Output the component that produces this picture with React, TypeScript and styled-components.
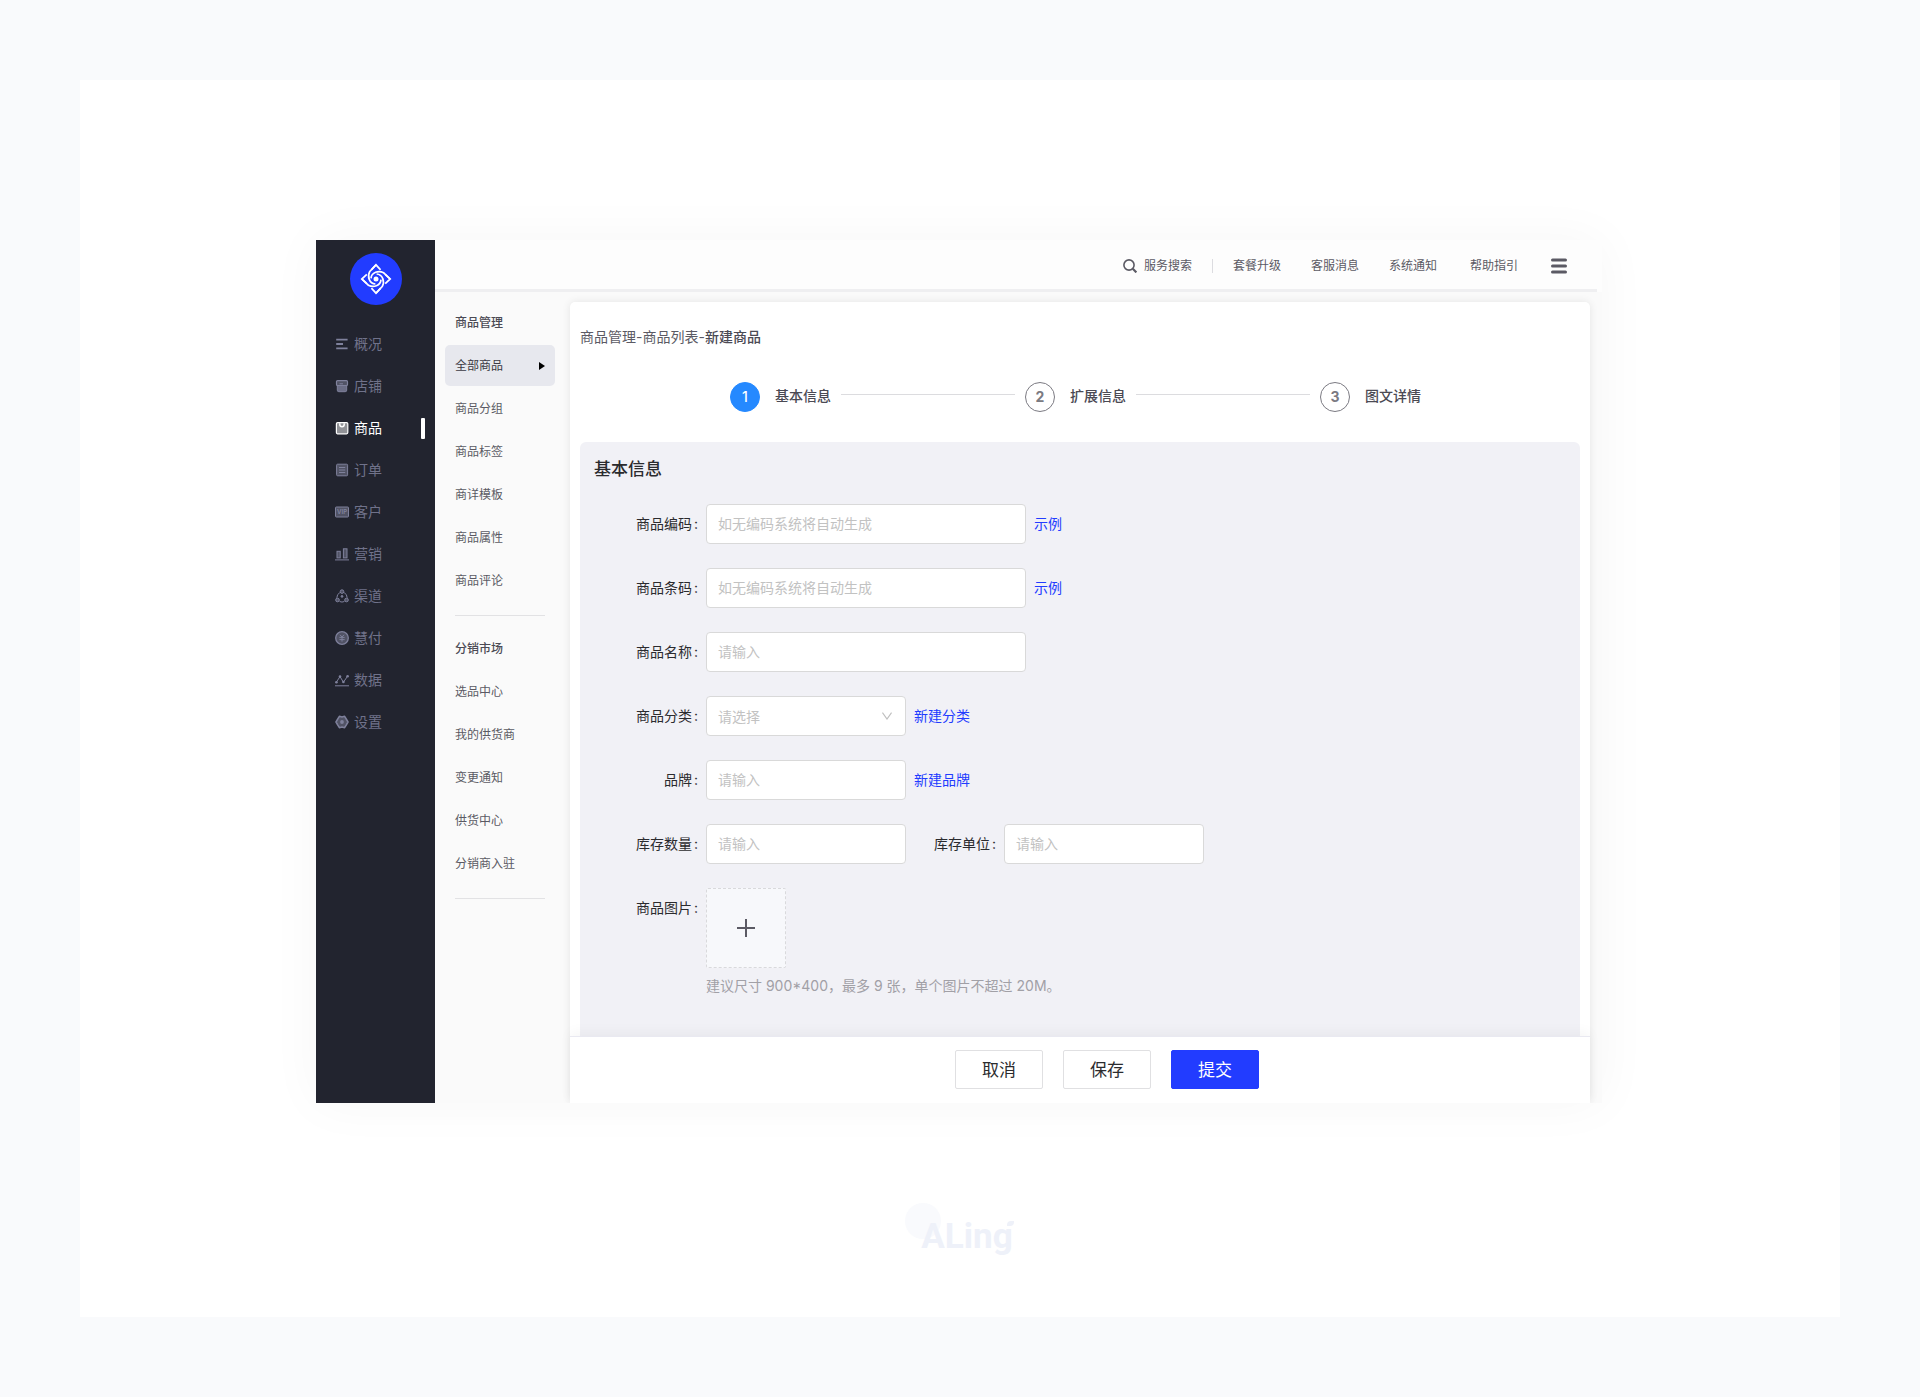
import React from 'react';
import styled, { createGlobalStyle } from 'styled-components';

const font = 'Inter, "Noto Sans CJK SC", sans-serif';

const GlobalStyle = createGlobalStyle`
  *, *::before, *::after { box-sizing: border-box; }
  body { margin: 0; background: #f9fafc; font-family: ${font}; color: #5b5a64; font-size: 14px; line-height: 20px; }
  button, input, select { font-family: inherit; font-size: inherit; line-height: inherit; }
  a { text-decoration: none; color: inherit; }
  ul { list-style: none; margin: 0; padding: 0; }
  svg { display: block; }
`;

const Page = styled.div`
  display: flex;
  flex-direction: column;
  min-height: 100vh;
  padding: 80px;
`;

const Sheet = styled.div`
  flex: 1;
  display: flex;
  flex-direction: column;
  align-items: center;
  background: #fff;
  padding: 160px 238px 40px 236px;
`;

const Shell = styled.div`
  align-self: stretch;
  display: flex;
  background: #fafafa;
  overflow: hidden;
  box-shadow: 0 0 50px rgba(0, 0, 0, 0.04);
`;

const Sidebar = styled.aside`
  flex: none;
  width: 119px;
  padding-top: 13px;
  background: #22242f;
`;

const Brand = styled.a`
  display: flex;
  align-items: center;
  justify-content: center;
  width: 52px;
  height: 52px;
  margin: 0 auto 18px;
  border-radius: 50%;
  background: #223cff;
`;

const NavLink = styled.a<{ $active?: boolean }>`
  display: flex;
  align-items: center;
  gap: 5px;
  height: 42px;
  padding: 0 10px 0 19px;
  color: ${p => (p.$active ? '#ffffff' : '#70728a')};

  svg { color: ${p => (p.$active ? '#ffffff' : '#7f819c')}; }

  &::after {
    content: '';
    display: ${p => (p.$active ? 'block' : 'none')};
    margin-left: auto;
    width: 4px;
    height: 21px;
    border-radius: 1px;
    background: #fff;
  }
`;

const Content = styled.div`
  flex: 1;
  min-width: 0;
  display: flex;
  flex-direction: column;
`;

const TopBar = styled.header`
  background: #fdfdfd;
`;

const TopBarRow = styled.div`
  display: flex;
  align-items: center;
  justify-content: flex-end;
  gap: 33px;
  height: 49px;
  padding: 2px 35px 0 0;
  font-size: 12px;
`;

const TopBarLine = styled.div`
  height: 3px;
  margin-right: 5px;
  background: #efeff1;
`;

const TopGroup = styled.div`
  display: flex;
  align-items: center;
  gap: 20px;
`;

const TopLinks = styled.nav`
  display: flex;
  gap: 30px;
`;

const PlainButton = styled.button`
  display: flex;
  align-items: center;
  gap: 7px;
  padding: 0;
  border: 0;
  background: none;
  color: inherit;
  cursor: pointer;
`;

const Separator = styled.span`
  width: 1px;
  height: 14px;
  background: #dcdce0;
`;

const Body = styled.div`
  flex: 1;
  display: flex;
`;

const SubNav = styled.nav`
  flex: none;
  width: 135px;
  padding: 10px 15px 0 10px;
  font-size: 12px;
`;

const SubGroup = styled.ul`
  display: flex;
  flex-direction: column;
  gap: 2px;
  padding-bottom: 14px;

  &::after {
    content: '';
    height: 1px;
    margin: 12px 10px 0;
    background: #e2e2e4;
  }

  & + & { margin-top: -2px; }
`;

const SubTitle = styled.li`
  display: flex;
  align-items: center;
  height: 41px;
  padding: 0 10px;
  font-weight: 500;
  color: #4b4a54;
`;

const SubLink = styled.a<{ $active?: boolean }>`
  display: flex;
  align-items: center;
  justify-content: space-between;
  height: 41px;
  padding: 0 10px;
  border-radius: 5px;
  background: ${p => (p.$active ? '#e7e8ee' : 'transparent')};
  color: ${p => (p.$active ? '#3b3a44' : '#5b5a64')};
`;

const Main = styled.main`
  flex: 1;
  min-width: 0;
  display: flex;
  padding: 10px 12px 0 0;
`;

const Card = styled.section`
  flex: 1;
  display: flex;
  flex-direction: column;
  border-radius: 5px 5px 0 0;
  background: #fff;
  box-shadow: 0 0 8px rgba(0, 0, 0, 0.09);
`;

const CardBody = styled.div`
  flex: 1;
  display: flex;
  flex-direction: column;
  padding: 25px 10px 0;
`;

const Breadcrumb = styled.nav`
  color: #5b5a64;

  strong { font-weight: 500; color: #4b4a54; }
`;

const Steps = styled.ol`
  display: flex;
  align-items: center;
  list-style: none;
  margin: 35px 0 30px;
  padding: 0 159px 0 150px;
`;

const Step = styled.li`
  flex: none;
  display: flex;
  align-items: center;
  gap: 15px;
  font-weight: 500;
  color: #4b4a54;
`;

const StepNumber = styled.span<{ $active?: boolean }>`
  display: flex;
  align-items: center;
  justify-content: center;
  width: 30px;
  height: 30px;
  border: 1px solid ${p => (p.$active ? '#2589ff' : '#7b7a82')};
  border-radius: 50%;
  background: ${p => (p.$active ? '#2589ff' : '#ffffff')};
  color: ${p => (p.$active ? '#ffffff' : '#7b7a82')};
  font-weight: ${p => (p.$active ? 500 : 700)};
`;

const StepName = styled.span`
  padding-bottom: 2px;
`;

const StepLine = styled.li`
  flex: 1;
  height: 1px;
  margin: 0 10px 6px;
  background: #dcdcdf;
`;

const Panel = styled.form`
  flex: 1;
  padding: 14px 14px 40px;
  border-radius: 6px 6px 0 0;
  background: #f1f1f6;
`;

const PanelTitle = styled.h2`
  margin: 0 0 22px;
  font-size: 17px;
  line-height: 26px;
  font-weight: 500;
  color: #2b2b2e;
`;

const Rows = styled.div`
  display: flex;
  flex-direction: column;
  gap: 24px;
`;

const Row = styled.div`
  display: flex;
  align-items: flex-start;
  gap: 8px;
  line-height: 40px;
`;

const Label = styled.label<{ $inline?: boolean }>`
  flex: none;
  width: ${p => (p.$inline ? 'auto' : '104px')};
  padding-left: ${p => (p.$inline ? '20px' : '0')};
  text-align: right;
  color: #2b2b2e;

  span { margin-left: 2px; }
`;

const Input = styled.input<{ $wide?: boolean }>`
  width: ${p => (p.$wide ? '320px' : '200px')};
  height: 40px;
  padding: 0 11px;
  border: 1px solid #d9d9d9;
  border-radius: 4px;
  background: #fff;
  color: #2b2b2e;
  outline: none;

  &::placeholder { color: #c2c2c2; opacity: 1; }
  &:focus { border-color: #223cff; }
`;

const SelectWrap = styled.div`
  position: relative;
  width: 200px;
  height: 40px;

  svg {
    position: absolute;
    top: 16px;
    right: 14px;
    pointer-events: none;
  }
`;

const Select = styled.select`
  display: block;
  width: 100%;
  height: 40px;
  padding: 0 32px 0 11px;
  border: 1px solid #d9d9d9;
  border-radius: 4px;
  background: #fff;
  color: #c2c2c2;
  appearance: none;
  outline: none;
`;

const TextLink = styled.a`
  color: #223cff;
`;

const Upload = styled.label`
  display: flex;
  align-items: center;
  justify-content: center;
  width: 80px;
  height: 80px;
  border: 1px dashed #d9d9dc;
  border-radius: 2px;
  background: #f7f8fb;
  color: #5b5a64;
  cursor: pointer;

  input { display: none; }
`;

const Hint = styled.p`
  margin: 8px 0 0;
  line-height: 20px;
  color: #a1a0a6;
`;

const Footer = styled.footer`
  display: flex;
  justify-content: center;
  gap: 20px;
  padding: 13px 0 14px 54px;
  border-top: 1px solid #e9e9f1;
  background: #fff;
  box-shadow: 0 -4px 12px rgba(0, 0, 0, 0.04);
`;

const Button = styled.button<{ $primary?: boolean }>`
  width: 88px;
  height: 39px;
  padding: 0;
  border: 1px solid ${p => (p.$primary ? '#223cff' : '#e0e0e2')};
  border-radius: 2px;
  background: ${p => (p.$primary ? '#223cff' : '#ffffff')};
  color: ${p => (p.$primary ? '#ffffff' : '#2b2b2e')};
  font-size: 17px;
  cursor: pointer;
`;

const Signature = styled.div`
  display: flex;
  margin-top: 100px;
  padding-left: 16px;
  position: relative;
  color: #eef1f9;
  font-family: Roboto, sans-serif;
  font-size: 35px;
  font-weight: 700;
  line-height: 68px;

  svg { position: absolute; left: 0; top: 0; }
  span { position: relative; }
`;

const Svg = ({ children }: { children: React.ReactNode }) => (
  <svg width="14" height="14" viewBox="0 0 14 14" fill="none" stroke="currentColor" aria-hidden="true">
    {children}
  </svg>
);

const soft = { fill: 'currentColor', fillOpacity: 0.5 };

const sections: { name: string; icon: React.ReactNode }[] = [
  { name: '概况', icon: <Svg><path strokeWidth="1.8" d="M1.2 2.6H12.6M1.2 7H8M1.2 11.4H12.6" /></Svg> },
  {
    name: '店铺',
    icon: (
      <Svg>
        <path {...soft} fillOpacity={0.8} d="M2.3 6.5V11.2Q2.3 12.7 3.8 12.7H10.2Q11.7 12.7 11.7 11.2V6.5" />
        <rect {...soft} x="1.5" y="1.7" width="11" height="4.8" rx="1" strokeWidth="1.2" />
        <path d="M4.5 4.8H8" />
      </Svg>
    ),
  },
  {
    name: '商品',
    icon: (
      <Svg>
        <rect {...soft} x="1.4" y="1.6" width="11.4" height="11.2" rx="1.2" strokeWidth="1.2" />
        <path strokeWidth="1.5" d="M4.8 2.2V3.6Q4.8 5.8 7 5.8T9.2 3.6V2.2" />
      </Svg>
    ),
  },
  {
    name: '订单',
    icon: (
      <Svg>
        <rect {...soft} x="1.6" y="1.2" width="11" height="11.6" rx="1" />
        <path d="M4 4.5H10.2M4 7H10.2M4 9.5H10.2" />
      </Svg>
    ),
  },
  {
    name: '客户',
    icon: (
      <Svg>
        <rect {...soft} x="0.5" y="2" width="13" height="10" rx="0.8" />
        <text x="7" y="9.3" textAnchor="middle" fontSize="6" fontWeight="700" fill="currentColor" stroke="none">
          VIP
        </text>
      </Svg>
    ),
  },
  {
    name: '营销',
    icon: (
      <Svg>
        <rect {...soft} x="2" y="4.3" width="3.2" height="6.6" />
        <rect {...soft} x="8.4" y="1.8" width="3.6" height="9.1" />
        <path d="M0 12.9H14" />
      </Svg>
    ),
  },
  {
    name: '渠道',
    icon: (
      <Svg>
        <circle {...soft} cx="7" cy="2.6" r="1.8" />
        <circle {...soft} cx="2.5" cy="11" r="1.8" />
        <circle {...soft} cx="11.5" cy="11" r="1.8" />
        <path d="M4.9 3.6Q2 5 1.8 8.8M9.1 3.6Q12 5 12.2 8.8M4.6 12.5Q7 13.6 9.4 12.5" />
        <circle cx="7" cy="7.4" r="0.9" fill="currentColor" />
      </Svg>
    ),
  },
  {
    name: '慧付',
    icon: (
      <Svg>
        <circle {...soft} cx="7" cy="7" r="6.3" strokeWidth="1.3" />
        <path d="M5 3.8L7 6L9 3.8M4.4 6.4H9.6M4.4 8.6H9.6M7 6V10.6" />
      </Svg>
    ),
  },
  {
    name: '数据',
    icon: (
      <Svg>
        <path strokeWidth="1" d="M1.2 9.4L5 3.6L8.4 9.2L12.6 3.2" />
        <g fill="currentColor" stroke="none">
          <circle cx="1.4" cy="9.2" r="1.3" />
          <circle cx="5" cy="3.6" r="1.3" />
          <circle cx="8.4" cy="9" r="1.3" />
          <circle cx="12.6" cy="3.2" r="1.3" />
        </g>
        <path d="M0 12.8H14" />
      </Svg>
    ),
  },
  {
    name: '设置',
    icon: (
      <Svg>
        <path
          {...soft}
          strokeWidth="1.6"
          strokeLinejoin="round"
          d="M4.4 1.3L7 2L9.6 1.3L11.2 3.9L13 7L11.2 10.1L9.6 12.7L7 12L4.4 12.7L2.8 10.1L1 7L2.8 3.9Z"
        />
        <circle cx="7" cy="7" r="1.9" fill="currentColor" stroke="none" />
      </Svg>
    ),
  },
];

const BrandMark = () => (
  <svg width="32" height="32" viewBox="-16 -16 32 32" fill="none" stroke="#fff" strokeWidth="1.7" aria-hidden="true">
    {[0, 90, 180, 270].map(angle => (
      <g key={angle} transform={`rotate(${angle})`}>
        <path d="M-4.4 -9.4L0 -14.2L4.6 -9.2" />
        <path d="M14.2 0L7.6 -6.2C2.6 -9 -4.6 -6.8 -5 -0.6" />
      </g>
    ))}
    <circle r="2.5" fill="#fff" stroke="none" />
  </svg>
);

const subGroups = [
  { title: '商品管理', items: ['全部商品', '商品分组', '商品标签', '商详模板', '商品属性', '商品评论'] },
  { title: '分销市场', items: ['选品中心', '我的供货商', '变更通知', '供货中心', '分销商入驻'] },
];

const steps = ['基本信息', '扩展信息', '图文详情'];

const FieldLabel = ({ id, text, inline }: { id: string; text: string; inline?: boolean }) => (
  <Label htmlFor={id} $inline={inline}>
    {text}
    <span>:</span>
  </Label>
);

export default function App() {
  return (
    <>
      <GlobalStyle />
      <Page>
        <Sheet>
          <Shell>
            <Sidebar>
              <Brand href="#" aria-label="首页">
                <BrandMark />
              </Brand>
              <nav>
                {sections.map(s => (
                  <NavLink key={s.name} href="#" $active={s.name === '商品'}>
                    {s.icon}
                    {s.name}
                  </NavLink>
                ))}
              </nav>
            </Sidebar>
            <Content>
              <TopBar>
                <TopBarRow>
                  <TopGroup>
                    <PlainButton type="button">
                      <svg width="14" height="14" viewBox="0 0 14 14" fill="none" stroke="currentColor" strokeWidth="1.6" aria-hidden="true">
                        <circle cx="6" cy="6" r="5.1" />
                        <path strokeWidth="2.2" d="M9.8 9.8L13.4 13.4" />
                      </svg>
                      服务搜索
                    </PlainButton>
                    <Separator />
                    <TopLinks>
                      <a href="#">套餐升级</a>
                      <a href="#">客服消息</a>
                      <a href="#">系统通知</a>
                    </TopLinks>
                  </TopGroup>
                  <a href="#">帮助指引</a>
                  <PlainButton type="button" aria-label="菜单">
                    <svg width="16" height="16" viewBox="0 0 16 16" stroke="currentColor" strokeWidth="3" strokeLinecap="round" aria-hidden="true">
                      <path d="M1.5 2H14.5M1.5 8H14.5M1.5 14H14.5" />
                    </svg>
                  </PlainButton>
                </TopBarRow>
                <TopBarLine />
              </TopBar>
              <Body>
                <SubNav>
                  {subGroups.map(g => (
                    <SubGroup key={g.title}>
                      <SubTitle>{g.title}</SubTitle>
                      {g.items.map(item => (
                        <li key={item}>
                          <SubLink href="#" $active={item === '全部商品'}>
                            {item}
                            {item === '全部商品' && (
                              <svg width="6" height="8" viewBox="0 0 6 8" aria-hidden="true">
                                <path d="M0 0L6 4L0 8Z" fill="#000" />
                              </svg>
                            )}
                          </SubLink>
                        </li>
                      ))}
                    </SubGroup>
                  ))}
                </SubNav>
                <Main>
                  <Card>
                    <CardBody>
                      <Breadcrumb>
                        <a href="#">商品管理</a>-<a href="#">商品列表</a>-<strong>新建商品</strong>
                      </Breadcrumb>
                      <Steps>
                        {steps.map((name, i) => (
                          <React.Fragment key={name}>
                            {i > 0 && <StepLine aria-hidden="true" />}
                            <Step>
                              <StepNumber $active={i === 0}>{i + 1}</StepNumber>
                              <StepName>{name}</StepName>
                            </Step>
                          </React.Fragment>
                        ))}
                      </Steps>
                      <Panel id="product" onSubmit={e => e.preventDefault()}>
                        <PanelTitle>基本信息</PanelTitle>
                        <Rows>
                          <Row>
                            <FieldLabel id="code" text="商品编码" />
                            <Input id="code" $wide placeholder="如无编码系统将自动生成" />
                            <TextLink href="#">示例</TextLink>
                          </Row>
                          <Row>
                            <FieldLabel id="barcode" text="商品条码" />
                            <Input id="barcode" $wide placeholder="如无编码系统将自动生成" />
                            <TextLink href="#">示例</TextLink>
                          </Row>
                          <Row>
                            <FieldLabel id="name" text="商品名称" />
                            <Input id="name" $wide placeholder="请输入" />
                          </Row>
                          <Row>
                            <FieldLabel id="category" text="商品分类" />
                            <SelectWrap>
                              <Select id="category" defaultValue="">
                                <option value="">请选择</option>
                              </Select>
                              <svg width="10" height="8" viewBox="0 0 10 8" fill="none" stroke="#bfbfbf" strokeWidth="1.2" aria-hidden="true">
                                <path d="M0.4 0.6L5 7L9.6 0.6" />
                              </svg>
                            </SelectWrap>
                            <TextLink href="#">新建分类</TextLink>
                          </Row>
                          <Row>
                            <FieldLabel id="brand" text="品牌" />
                            <Input id="brand" placeholder="请输入" />
                            <TextLink href="#">新建品牌</TextLink>
                          </Row>
                          <Row>
                            <FieldLabel id="stock" text="库存数量" />
                            <Input id="stock" placeholder="请输入" />
                            <FieldLabel id="unit" text="库存单位" inline />
                            <Input id="unit" placeholder="请输入" />
                          </Row>
                          <Row>
                            <FieldLabel id="photo" text="商品图片" />
                            <div>
                              <Upload aria-label="上传图片">
                                <input id="photo" type="file" accept="image/*" multiple />
                                <svg width="18" height="18" viewBox="0 0 18 18" stroke="currentColor" strokeWidth="2" aria-hidden="true">
                                  <path d="M9 0V18M0 9H18" />
                                </svg>
                              </Upload>
                              <Hint>建议尺寸 900*400，最多 9 张，单个图片不超过 20M。</Hint>
                            </div>
                          </Row>
                        </Rows>
                      </Panel>
                    </CardBody>
                    <Footer>
                      <Button type="button">取消</Button>
                      <Button type="button">保存</Button>
                      <Button type="submit" form="product" $primary>提交</Button>
                    </Footer>
                  </Card>
                </Main>
              </Body>
            </Content>
          </Shell>
          <Signature>
            <svg width="110" height="36" viewBox="0 0 110 36" aria-hidden="true">
              <circle cx="18" cy="18" r="18" fill="#f9fafd" />
              <path d="M102 22Q102 18 106 18H109V19Q109 23 105 23H102Z" fill="#eef1f9" />
            </svg>
            <span>ALing</span>
          </Signature>
        </Sheet>
      </Page>
    </>
  );
}
